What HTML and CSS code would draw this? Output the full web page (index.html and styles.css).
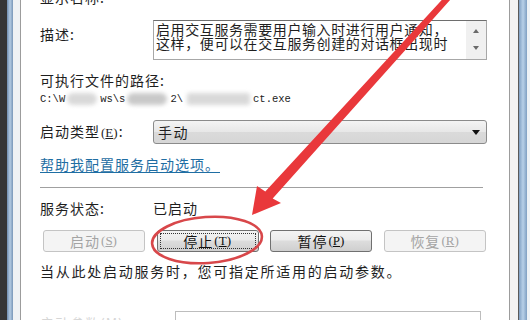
FILE: index.html
```html
<!DOCTYPE html>
<html lang="zh-CN">
<head>
<meta charset="utf-8">
<title>服务属性</title>
<link rel="stylesheet" href="styles.css">
</head>
<body>
<div class="window">
  <div class="edge-left"></div>
  <div class="panel">
    <div class="row row-name">
      <span class="label">显示名称:</span>
      <span class="mono value">Interactive Services Detection</span>
    </div>
    <div class="row row-desc">
      <span class="label">描述:</span>
      <div class="textarea">
        <div class="ta-text">启用交互服务需要用户输入时进行用户通知，<br>这样，便可以在交互服务创建的对话框出现时</div>
        <div class="ta-scroll"><span class="tri up"></span><span class="tri down"></span></div>
      </div>
    </div>
    <div class="path-label">可执行文件的路径:</div>
    <div class="path mono"><span>C:\W</span><span class="blob b1"></span><span>ws\s</span><span class="blob b2"></span><span>2\</span><span class="blob b3"></span><span>ct.exe</span></div>
    <div class="row row-type">
      <span class="label">启动类型<span class="acc">(<u>E</u>)</span>:</span>
      <div class="select"><span class="sel-text">手动</span><span class="caret"></span></div>
    </div>
    <a class="help">帮助我配置服务启动选项。</a>
    <div class="sep"></div>
    <div class="row row-status">
      <span class="label">服务状态:</span>
      <span class="status">已启动</span>
    </div>
    <div class="buttons">
      <div class="btn disabled">启动<span class="acc">(<u>S</u>)</span></div>
      <div class="btn focused"><span class="focus-ring">停止<span class="acc">(<u>T</u>)</span></span></div>
      <div class="btn">暂停<span class="acc">(<u>P</u>)</span></div>
      <div class="btn disabled">恢复<span class="acc">(<u>R</u>)</span></div>
    </div>
    <div class="note">当从此处启动服务时，您可指定所适用的启动参数。</div>
    <div class="row row-params">
      <span class="label faded">启动参数(M):</span>
      <div class="input"></div>
    </div>
  </div>
  <div class="edge-right"></div>
  <svg class="annot" width="530" height="320" viewBox="0 0 530 320">
    <ellipse cx="207" cy="240" rx="55" ry="23" fill="none" stroke="#d8474a" stroke-width="2.6" transform="rotate(-4 207 240)"/>
    <polygon fill="#e9383b" points="452.8,-12 265.3,191.6 257,186 252,215 281,203 272.7,198.4 457.2,-8"/>
  </svg>
</div>
</body>
</html>
```
FILE: styles.css
```css
* { box-sizing: border-box; margin: 0; padding: 0; }
html, body { width: 530px; height: 320px; overflow: hidden; background: #fff; }
body {
  font-family: "Noto Sans CJK SC", "Liberation Sans", sans-serif;
  font-size: 14px;
  color: #1e1e1e;
  letter-spacing: 1px;
}
.window { position: relative; display: flex; width: 530px; height: 320px; }
.edge-left {
  flex: 0 0 21px;
  background: linear-gradient(to right, #363636 0 7px, #6f8cae 7px, #b3cbe3 10px, #7896b8 13px, #eef1f4 13px 20px, #9c9c9c 20px 21px);
}
.edge-right {
  flex: 0 0 21px;
  background: linear-gradient(to right, #9c9c9c 0 1px, #f3f3f3 1px 9px, #5a5a5a 9px 10px, #7f9fc2 10px, #b8d0e8 14px, #7f9fc2 18px, #eef2f6 18px 21px);
}
.panel { flex: 1; padding-left: 19px; background: #fff; display: flex; flex-direction: column; }
.row { display: flex; align-items: center; }
.label { flex: none; width: 113px; line-height: 18px; white-space: nowrap; }
.mono { font-family: "Liberation Mono", monospace; font-size: 12.5px; letter-spacing: 0; }
.acc { font-family: "Liberation Serif", serif; font-size: 13px; letter-spacing: 0; padding: 0 1px; }

.row-name { margin-top: -12px; height: 18px; }
.row-name .value { line-height: 18px; }

.row-desc { margin-top: 14px; align-items: flex-start; }
.row-desc .label { padding-top: 5px; }
.textarea {
  width: 334px; height: 40px;
  border: 1px solid #a7a7a7; border-top-color: #6e6e6e;
  display: flex; background: #fff;
}
.ta-text { flex: 1; padding: 1px 0 0 2px; line-height: 14px; letter-spacing: 0.6px; white-space: nowrap; overflow: hidden; }
.ta-scroll { flex: 0 0 20px; background: #f0f0f0; display: flex; flex-direction: column; align-items: center; justify-content: space-between; padding: 8px 0 9px; }
.tri { width: 0; height: 0; border-left: 3.5px solid transparent; border-right: 3.5px solid transparent; }
.tri.up { border-bottom: 4px solid #6a6a6a; }
.tri.down { border-top: 4px solid #6a6a6a; }

.path-label { margin-top: 11px; line-height: 18px; }
.path { margin-top: 3px; line-height: 14px; height: 14px; display: flex; align-items: center; color: #222; font-size: 10.5px; }
.blob { display: inline-block; height: 12px; background: #d9d9d9; border-radius: 6px; filter: blur(2px); }
.b1 { width: 30px; margin: 0 3px 0 2px; }
.b2 { width: 40px; margin: 0 3px 0 2px; background: #c9c9c9; }
.b3 { width: 63px; margin: 0 3px 0 4px; border-radius: 2px; }

.row-type { margin-top: 14px; }
.select {
  width: 334px; height: 24px;
  border: 1px solid #8b8b8b; border-radius: 3px;
  background: linear-gradient(#f4f4f4, #e7e7e7 50%, #dadada 51%, #d6d6d6);
  display: flex; align-items: center; justify-content: space-between;
  padding: 0 6px 0 4px;
}
.sel-text { line-height: 18px; letter-spacing: 1.5px; }
.caret { width: 0; height: 0; border-left: 4.5px solid transparent; border-right: 4.5px solid transparent; border-top: 5px solid #111; }

.help { margin-top: 11px; line-height: 18px; color: #1f6ea3; text-decoration: underline; text-underline-offset: 2px; align-self: flex-start; }
.sep { margin-top: 14px; width: 443px; height: 2px; border-top: 1px solid #a0a0a0; border-bottom: 1px solid #fff; }

.row-status { margin-top: 10px; }
.status { line-height: 18px; }

.buttons { margin-top: 13px; margin-left: 3px; display: flex; gap: 11.7px; }
.btn {
  width: 102px; height: 22px;
  border: 1px solid #707070; border-radius: 3px;
  background: linear-gradient(#f3f3f3, #ebebeb 45%, #dddddd 50%, #cfcfcf);
  display: flex; align-items: center; justify-content: center;
  line-height: 16px; color: #111; letter-spacing: 1px;
}
.btn.disabled { border-color: #c4c4c4; background: #f4f4f4; color: #a4a4a4; }
.btn.focused { padding: 2px; }
.focus-ring { flex: 1; align-self: stretch; display: flex; align-items: center; justify-content: center; border: 1px dotted #333; }

.note { margin-top: 10px; line-height: 18px; letter-spacing: 1.75px; white-space: nowrap; }

.row-params { margin-top: 31px; align-items: flex-start; }
.row-params .label { width: 135px; color: #d6d6d6; padding-top: 3px; }
.input { width: 306px; height: 22px; border: 1px solid #bdbdbd; border-bottom: none; }

.annot { position: absolute; left: 0; top: 0; pointer-events: none; }
```
